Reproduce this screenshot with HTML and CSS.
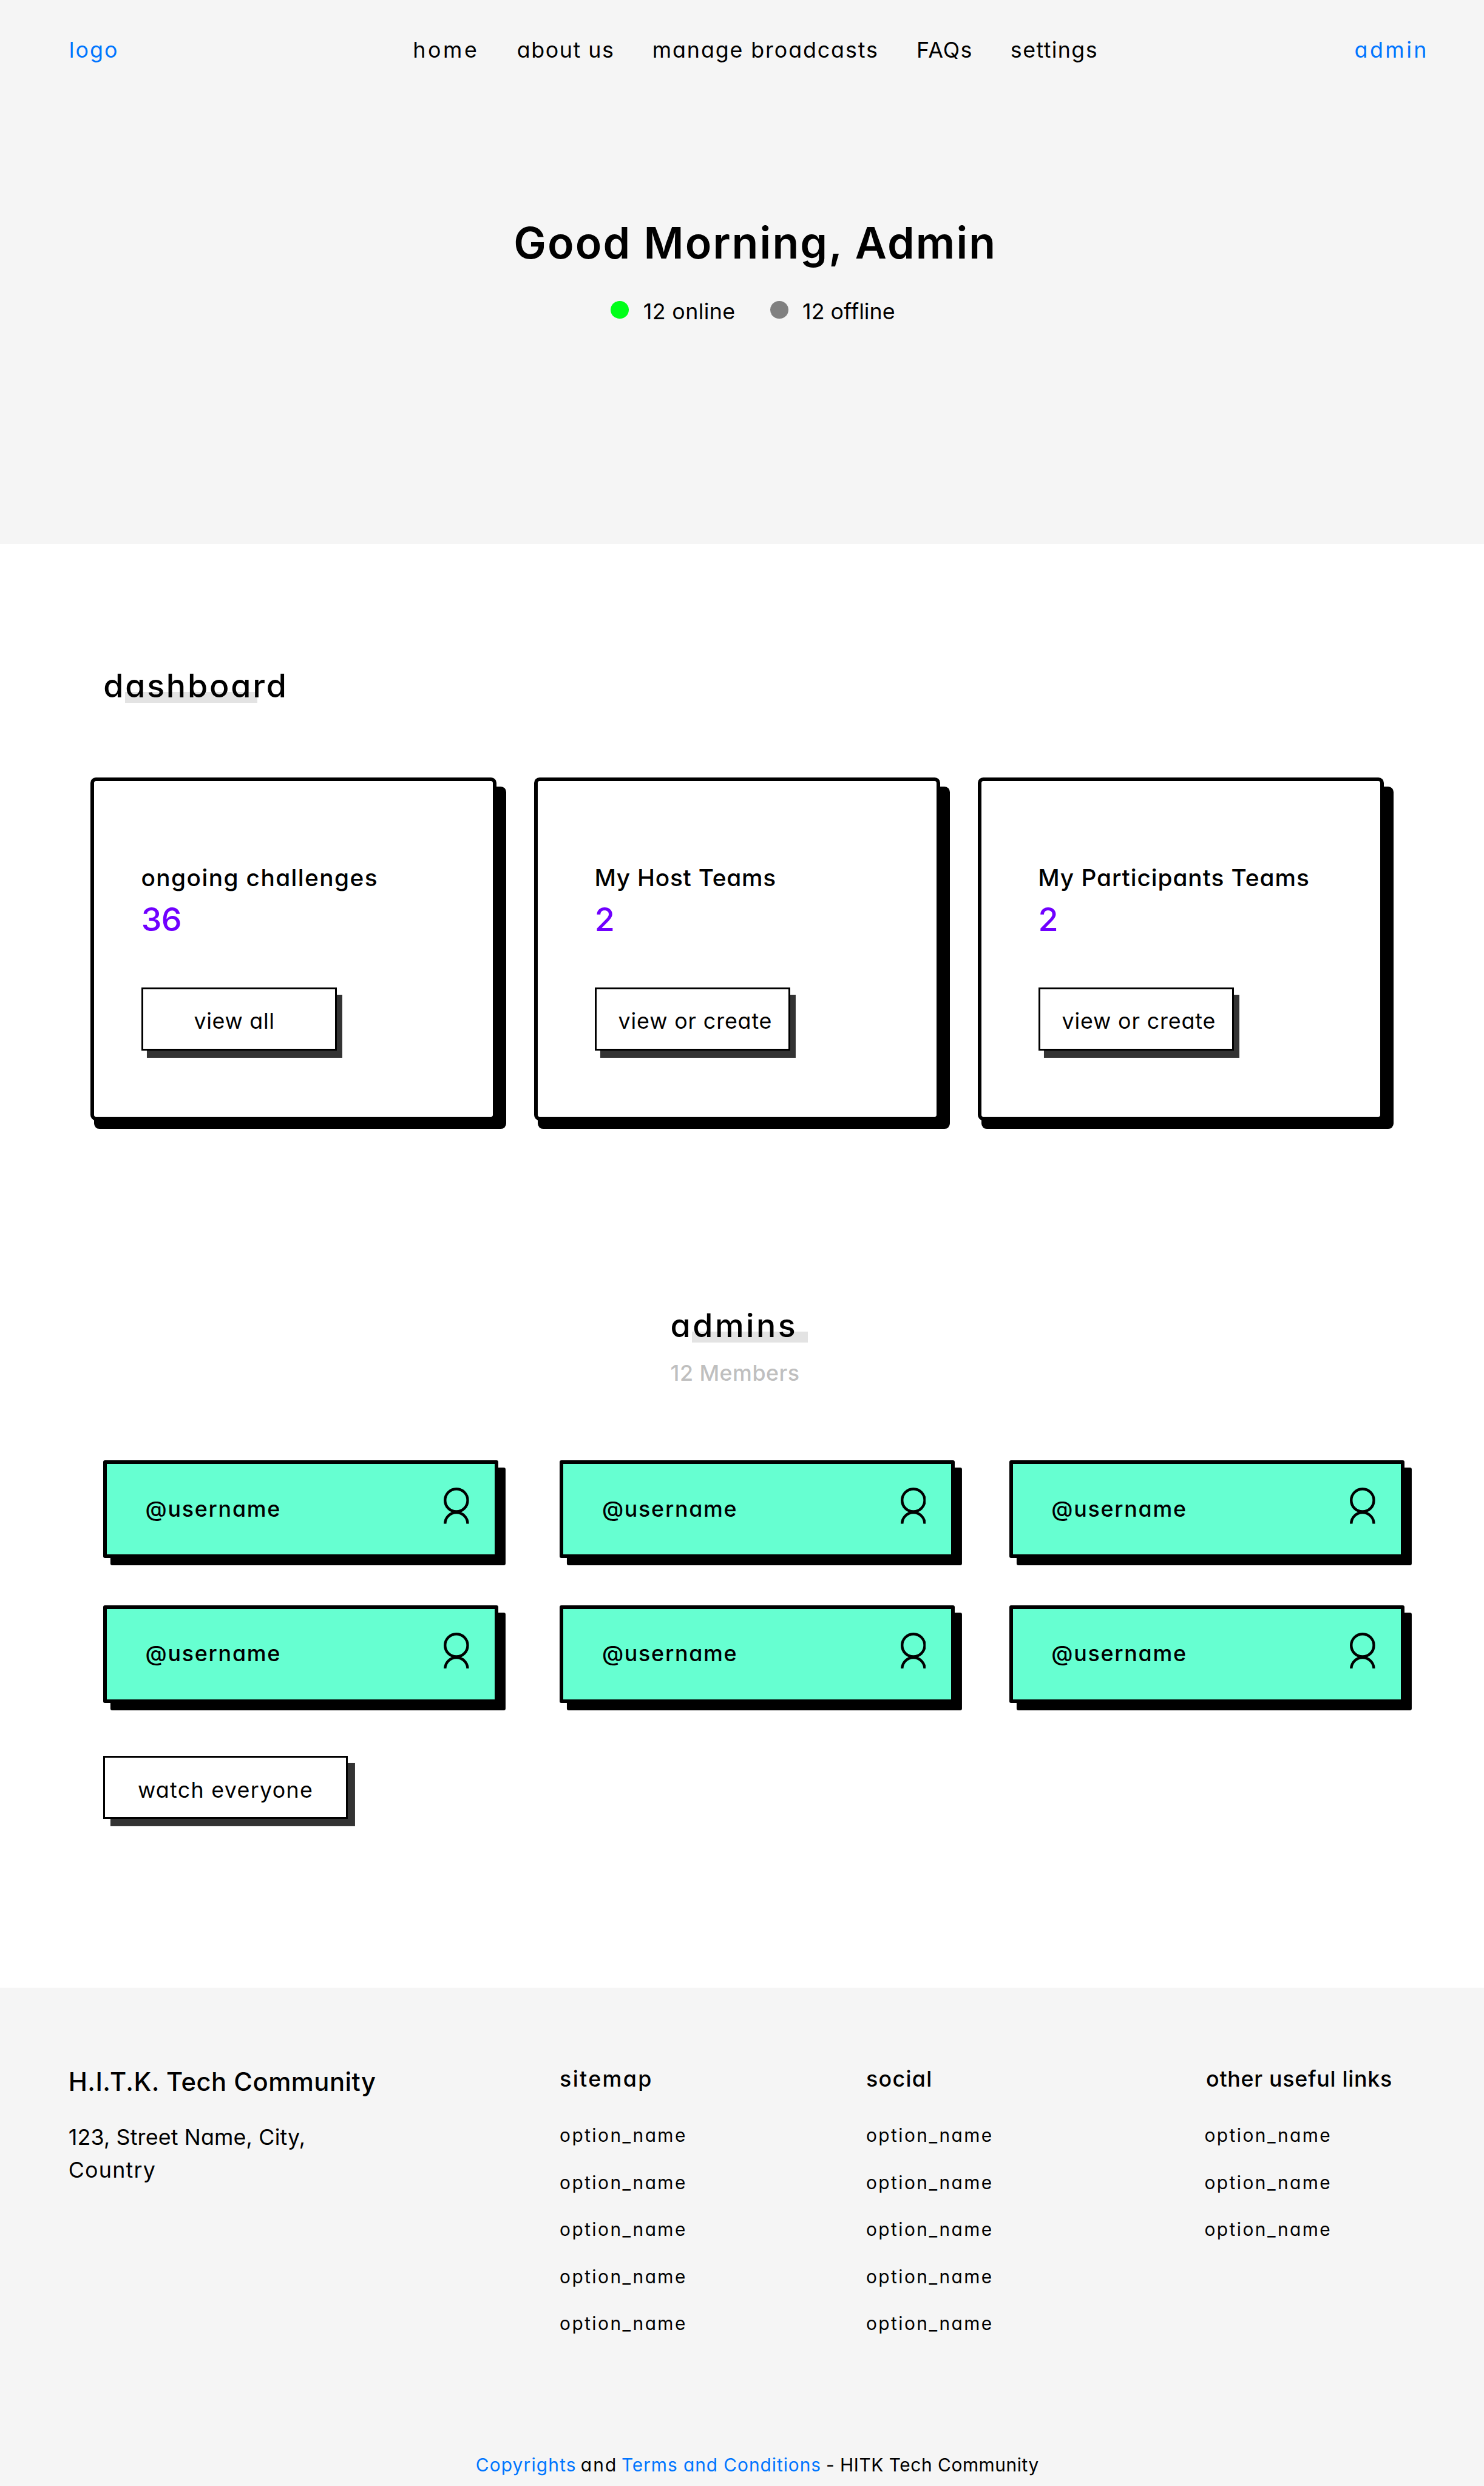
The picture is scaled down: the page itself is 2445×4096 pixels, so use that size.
FILE: index.html
```html
<!DOCTYPE html>
<html lang="en">
<head>
<meta charset="utf-8">
<title>Admin dashboard</title>
<link rel="stylesheet" href="styles.css">
</head>
<body>
<svg class="sprite" aria-hidden="true">
  <symbol id="person" viewBox="0 0 56 80">
    <circle cx="28" cy="28" r="25"/>
    <path d="M3 80a25 25 0 0 1 50 0"/>
  </symbol>
</svg>

<header class="hero">
  <nav class="nav">
    <a class="nav-logo">logo</a>
    <div class="nav-menu">
      <a class="nav-home">home</a>
      <a class="nav-about">about us</a>
      <a class="nav-broadcasts">manage broadcasts</a>
      <a class="nav-faqs">FAQs</a>
      <a class="nav-settings">settings</a>
    </div>
    <a class="nav-admin">admin</a>
  </nav>
  <h1 class="greeting">Good Morning, Admin</h1>
  <div class="status">
    <span class="dot dot-online"></span><span class="status-online">12 online</span>
    <span class="dot dot-offline"></span><span class="status-offline">12 offline</span>
  </div>
</header>

<main class="main">
  <h2 class="heading heading-dashboard">dashboard</h2>
  <section class="cards">
    <article class="card card-challenges">
      <h3 class="card-title">ongoing challenges</h3>
      <p class="card-count">36</p>
      <a class="button button-all">view all</a>
    </article>
    <article class="card card-host">
      <h3 class="card-title">My Host Teams</h3>
      <p class="card-count">2</p>
      <a class="button">view or create</a>
    </article>
    <article class="card card-participants">
      <h3 class="card-title">My Participants Teams</h3>
      <p class="card-count">2</p>
      <a class="button">view or create</a>
    </article>
  </section>

  <h2 class="heading heading-admins">admins</h2>
  <p class="members">12 Members</p>
  <section class="admins">
    <div class="admin"><span>@username</span><svg class="person"><use href="#person"/></svg></div>
    <div class="admin"><span>@username</span><svg class="person"><use href="#person"/></svg></div>
    <div class="admin"><span>@username</span><svg class="person"><use href="#person"/></svg></div>
    <div class="admin"><span>@username</span><svg class="person"><use href="#person"/></svg></div>
    <div class="admin"><span>@username</span><svg class="person"><use href="#person"/></svg></div>
    <div class="admin"><span>@username</span><svg class="person"><use href="#person"/></svg></div>
  </section>
  <a class="button button-watch">watch everyone</a>
</main>

<footer class="footer">
  <div class="footer-columns">
    <div>
      <h4 class="org">H.I.T.K. Tech Community</h4>
      <p class="address"><span>123, Street Name, City,</span><br><span class="country">Country</span></p>
    </div>
    <div>
      <h4 class="links-title links-sitemap">sitemap</h4>
      <ul class="links"><li>option_name</li><li>option_name</li><li>option_name</li><li>option_name</li><li>option_name</li></ul>
    </div>
    <div>
      <h4 class="links-title links-social">social</h4>
      <ul class="links"><li>option_name</li><li>option_name</li><li>option_name</li><li>option_name</li><li>option_name</li></ul>
    </div>
    <div>
      <h4 class="links-title links-other">other useful links</h4>
      <ul class="links"><li>option_name</li><li>option_name</li><li>option_name</li></ul>
    </div>
  </div>
  <p class="legal"><a class="legal-copy">Copyrights</a><span class="legal-and">and</span><a class="legal-terms">Terms and Conditions</a><span class="legal-org">- HITK Tech Community</span></p>
</footer>
</body>
</html>
```

FILE: styles.css
```css
/* 1rem is 1/32.76 of the page width, so the whole page scales together */
html { font-size: calc(100vw / 32.76); }
* { box-sizing: border-box; }
body {
  margin: 0;
  background: #fff;
  color: #000;
  font-family: Inter, "Open Sans", sans-serif;
  font-feature-settings: "cv11";
  font-size: .48rem;
  line-height: .72rem;
  white-space: nowrap;
}
h1, h2, h3, h4, p, ul { margin: 0; padding: 0; font-weight: 500; }
p { font-weight: 400; }
ul { list-style: none; font-weight: 400; }
.sprite { display: none; }

/* Header */
.hero { height: 12rem; padding-top: .757rem; background: #f5f5f5; }
.nav { display: flex; padding: 0 1.22rem 0 1.525rem; }
.nav-logo, .nav-admin, .legal a { color: #0075ff; }
.nav-logo { letter-spacing: .0566em; }
.nav-menu { display: flex; gap: .835rem; margin-left: 6.495rem; }
.nav-home { letter-spacing: .1em; }
.nav-about { letter-spacing: .043em; }
.nav-broadcasts { letter-spacing: .0524em; }
.nav-faqs { letter-spacing: .0336em; }
.nav-settings { letter-spacing: .0388em; }
.nav-admin { margin-left: auto; letter-spacing: .0966em; }
.greeting {
  margin: 3.179rem 0 0 11.34rem;
  font-size: .96rem;
  line-height: 1.44rem;
  font-weight: 600;
  letter-spacing: .0294em;
}
.status { display: flex; margin: .425rem 0 0 13.48rem; }
.dot { flex: none; width: .4rem; height: .4rem; margin-top: .12rem; border-radius: 50%; }
.dot-online { background: #00ff19; }
.dot-offline { margin-left: .771rem; background: #808080; }
.status-online { margin-left: .32rem; letter-spacing: .0103em; }
.status-offline { margin-left: .31rem; }

/* Section headings, with the grey highlight bar under the letters */
.main { height: 31.88rem; padding-top: 2.602rem; }
.heading { position: relative; z-index: 0; width: max-content; font-size: .72rem; line-height: 1.08rem; }
.heading::before {
  content: "";
  position: absolute;
  z-index: -1;
  top: .678rem;
  left: .48rem;
  width: 2.92rem;
  height: .24rem;
  background: #e3e3e3;
}
.heading-dashboard { margin-left: 2.28rem; letter-spacing: .0519em; }
.heading-admins { margin: 3.99rem 0 0 14.8rem; letter-spacing: .0641em; }
.heading-admins::before { top: .67rem; left: .48rem; width: 2.56rem; }

/* Dashboard cards */
.cards { display: grid; grid-template-columns: repeat(3, 8.96rem); gap: .833rem; margin: 1.478rem 0 0 2rem; }
.card {
  position: relative;
  z-index: 0;
  height: 7.58rem;
  padding: 1.824rem 0 0 1.335rem;
}
/* white face over a black block that is shifted right and down */
.card::before, .card::after { content: ""; position: absolute; border-radius: .12rem; }
.card::before { z-index: -2; inset: .2rem -.22rem -.18rem .08rem; background: #000; }
.card::after { z-index: -1; inset: 0; border: 6px solid #000; background: #fff; }
.card-challenges { padding-left: 1.12rem; }
.card-title { font-size: .52rem; line-height: .78rem; letter-spacing: .0367em; margin-left: -.005rem; }
.card-host .card-title { letter-spacing: .02em; }
.card-participants .card-title { letter-spacing: .0244em; }
.card-count { margin: -.005rem 0 0; color: #7000ff; font-size: .72rem; line-height: 1.08rem; letter-spacing: -.016em; font-weight: 500; }
.button {
  display: block;
  width: 4.32rem;
  height: 1.4rem;
  margin-top: .961rem;
  padding: .355rem 0 0 .48rem;
  border: 3px solid #000;
  background: #fff;
  box-shadow: .12rem .16rem #333;
  letter-spacing: .0238em;
}
.button-all { padding-left: 1.12rem; letter-spacing: .0193em; }

/* Admin list */
.members { margin: .147rem 0 0 14.8rem; color: #bfbfbf; font-weight: 500; letter-spacing: .013em; }
.admins { display: grid; grid-template-columns: 10.08rem 9.92rem 8.72rem; row-gap: 1.04rem; margin: 1.563rem 0 0 2.28rem; }
.admin {
  display: flex;
  align-items: flex-start;
  justify-content: space-between;
  width: 8.72rem;
  height: 2.16rem;
  padding: .52rem .56rem 0 .85rem;
  border: 6px solid #000;
  border-radius: .04rem;
  background: #66ffd1;
  box-shadow: .16rem .16rem #000;
  font-weight: 500;
  letter-spacing: .0484em;
}
.admin span { margin-top: .115rem; }
.person { width: .56rem; height: .8rem; fill: none; stroke: #000; stroke-width: 6; }
.button-watch {
  width: 5.4rem;
  margin: 1.16rem 0 0 2.28rem;
  padding: .36rem 0 0 .72rem;
  box-shadow: .16rem .16rem #333;
  letter-spacing: .0362em;
}

/* Footer */
.footer { height: 11rem; padding: 1.669rem 0 0 1.51rem; background: #f5f5f5; }
.footer-columns { display: grid; grid-template-columns: 10.845rem 6.765rem 7.47rem auto; }
.org { font-size: .56rem; line-height: .84rem; letter-spacing: .0113em; }
.address { margin-top: .425rem; line-height: .73rem; letter-spacing: .0044em; }
.country { letter-spacing: .0343em; }
.links-sitemap { letter-spacing: .0649em; }
.links-social { letter-spacing: .0362em; }
.links-other { margin-left: .035rem; letter-spacing: .0195em; }
.links { display: grid; gap: .44rem; margin-top: .572rem; font-size: .4rem; line-height: .6rem; letter-spacing: .0822em; }
.legal { display: flex; margin: 2.52rem 0 0 8.99rem; font-size: .4rem; line-height: .6rem; }
.legal-copy { letter-spacing: .0399em; }
.legal-and { margin-left: .093rem; letter-spacing: .0733em; }
.legal-terms { margin-left: .086rem; letter-spacing: .0319em; }
.legal-org { margin-left: .106rem; letter-spacing: .0189em; }
```
